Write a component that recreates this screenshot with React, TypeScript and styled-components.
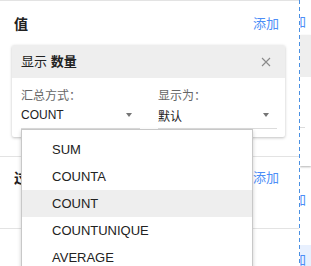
import React from "react";
import styled, { createGlobalStyle } from "styled-components";

const GlobalStyle = createGlobalStyle`
  html, body {
    margin: 0;
    padding: 0;
    background: #fff;
  }
  body {
    font-family: "Liberation Sans", "Noto Sans CJK SC", sans-serif;
  }
  * {
    box-sizing: border-box;
  }
`;

const Page = styled.div`
  display: flex;
  width: 311px;
  height: 266px;
  overflow: hidden;
  background: #fff;
`;

const Editor = styled.div`
  position: relative;
  width: 299px;
  flex-shrink: 0;
  border-top: 1px solid #e3e3e3;
`;

const Section = styled.section<{ $top: number; $bottom: number }>`
  padding: ${(p) => p.$top}px 14px ${(p) => p.$bottom}px 12px;
  border-bottom: 1px solid #e3e3e3;
`;

const SectionHead = styled.div`
  display: flex;
  justify-content: space-between;
  align-items: center;
  height: 20px;
  padding: 0 6px 0 2px;
`;

const SectionTitle = styled.span`
  font-size: 14px;
  font-weight: 700;
  line-height: 20px;
  color: #212121;
`;

const AddLink = styled.span`
  font-size: 13px;
  line-height: 20px;
  color: #4d8ef7;
  cursor: pointer;
`;

const Card = styled.div`
  margin-top: 11px;
  background: #fff;
  border-radius: 2px;
  box-shadow: 0 1px 3px rgba(0, 0, 0, 0.25);
`;

const CardHeader = styled.div`
  display: flex;
  justify-content: space-between;
  align-items: center;
  height: 33px;
  padding: 0 14px 0 9px;
  background: #eeeeee;
  border-radius: 2px 2px 0 0;
`;

const CardTitle = styled.span`
  font-size: 13px;
  line-height: 18px;
  color: #222;

  b {
    font-weight: 700;
  }
`;

const CloseButton = styled.button`
  display: flex;
  padding: 0;
  border: none;
  background: none;
  cursor: pointer;
`;

const CardBody = styled.div`
  display: grid;
  grid-template-columns: 1fr 1fr;
  column-gap: 18px;
  padding: 10px 8px 8px 9px;
`;

const Field = styled.div`
  display: flex;
  flex-direction: column;
`;

const FieldLabel = styled.span`
  font-size: 12px;
  line-height: 16px;
  color: #666;
`;

const SelectBox = styled.div`
  display: flex;
  justify-content: space-between;
  align-items: center;
  height: 23px;
  margin-top: 2px;
  padding-bottom: 4px;
  border-bottom: 1px solid #dcdcdc;
  font-size: 12px;
  color: #222;
`;

const Caret = styled.span`
  width: 0;
  height: 0;
  margin-right: 8px;
  border-left: 3.5px solid transparent;
  border-right: 3.5px solid transparent;
  border-top: 4px solid #757575;
`;

const Menu = styled.ul`
  position: absolute;
  top: 128px;
  left: 21px;
  width: 232px;
  height: 170px;
  margin: 0;
  padding: 6px 0 0;
  list-style: none;
  background: #fff;
  border: 1px solid #c8c8c8;
  box-shadow: 0 2px 4px rgba(0, 0, 0, 0.2);
`;

const MenuItem = styled.li<{ $active?: boolean }>`
  height: 27px;
  padding-left: 30px;
  font-size: 13px;
  line-height: 27px;
  color: #222;
  background: ${(p) => (p.$active ? "#eeeeee" : "transparent")};
  cursor: pointer;
`;

const DashedGuide = styled.div`
  width: 1px;
  flex-shrink: 0;
  background: repeating-linear-gradient(
    to bottom,
    #4a90e2 0,
    #4a90e2 4px,
    transparent 4px,
    transparent 7px
  );
`;

const Strip = styled.div`
  flex: 1;
  display: flex;
  flex-direction: column;
  overflow: hidden;
`;

const StripAdd = styled.div<{ $top: number }>`
  display: flex;
  justify-content: flex-end;
  height: 20px;
  margin-top: ${(p) => p.$top}px;
  padding-right: 5px;
  font-size: 13px;
  line-height: 20px;
  white-space: nowrap;
  color: #4d8ef7;
`;

const StripCard = styled.div`
  margin-top: 3px;
  background: #fff;
  box-shadow: 0 1px 2px rgba(0, 0, 0, 0.3);
`;

const StripCardHead = styled.div`
  height: 42px;
  background: #eeeeee;
`;

const StripCardBody = styled.div`
  height: 89px;
  padding-top: 50px;
`;

const StripUnderline = styled.div`
  width: 5px;
  height: 1px;
  background: #dcdcdc;
`;

const StripRule = styled.div<{ $top: number }>`
  height: 1px;
  margin-top: ${(p) => p.$top}px;
  background: #e3e3e3;
`;

const StripHighlight = styled.div`
  flex: 1;
  margin-top: 11px;
  padding-top: 5px;
  background: #e8f0fe;
`;

const summaryOptions = ["SUM", "COUNTA", "COUNT", "COUNTUNIQUE", "AVERAGE"];

const CloseIcon = () => (
  <svg width="10" height="10" viewBox="0 0 10 10">
    <path d="M1 1L9 9M9 1L1 9" stroke="#8a8a8a" strokeWidth="1.1" fill="none" />
  </svg>
);

const App: React.FC = () => {
  const selected = "COUNT";

  return (
    <Page>
      <GlobalStyle />
      <Editor>
        <Section $top={13} $bottom={19}>
          <SectionHead>
            <SectionTitle>值</SectionTitle>
            <AddLink>添加</AddLink>
          </SectionHead>
          <Card>
            <CardHeader>
              <CardTitle>
                显示 <b>数量</b>
              </CardTitle>
              <CloseButton aria-label="删除">
                <CloseIcon />
              </CloseButton>
            </CardHeader>
            <CardBody>
              <Field>
                <FieldLabel>汇总方式：</FieldLabel>
                <SelectBox>
                  <span>{selected}</span>
                  <Caret />
                </SelectBox>
              </Field>
              <Field>
                <FieldLabel>显示为：</FieldLabel>
                <SelectBox>
                  <span>默认</span>
                  <Caret />
                </SelectBox>
              </Field>
            </CardBody>
          </Card>
        </Section>
        <Section $top={11} $bottom={40}>
          <SectionHead>
            <SectionTitle>过滤器</SectionTitle>
            <AddLink>添加</AddLink>
          </SectionHead>
        </Section>
        <Menu>
          {summaryOptions.map((option) => (
            <MenuItem key={option} $active={option === selected}>
              {option}
            </MenuItem>
          ))}
        </Menu>
      </Editor>
      <DashedGuide />
      <Strip>
        <StripAdd $top={12}>添加</StripAdd>
        <StripCard>
          <StripCardHead />
          <StripCardBody>
            <StripUnderline />
          </StripCardBody>
        </StripCard>
        <StripRule $top={11} />
        <StripAdd $top={13}>添加</StripAdd>
        <StripRule $top={24} />
        <StripHighlight>
          <StripAdd $top={0}>添加</StripAdd>
        </StripHighlight>
      </Strip>
    </Page>
  );
};

export default App;
